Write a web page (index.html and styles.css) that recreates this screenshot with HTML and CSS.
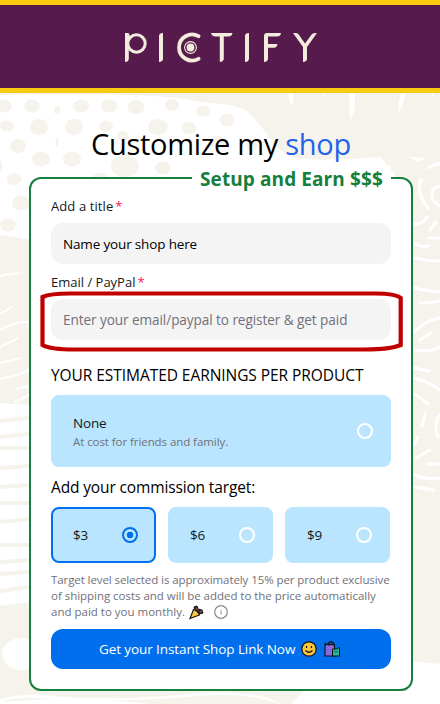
FILE: index.html
```html
<!DOCTYPE html>
<html lang="en">
<head>
<meta charset="utf-8">
<title>Pictify</title>
<link rel="stylesheet" href="styles.css">
</head>
<body>
<header class="top">
<svg class="logo" width="194" height="32" viewBox="123 31 194 32" fill="none" stroke="#f3ecdc" stroke-width="3.8" role="img" aria-label="Pictify">
<path d="M125 33H128.500L130 36V40L128.800 42V59Q128.500 62 125 62Z" fill="#f3ecdc" stroke="none"/><circle cx="136.500" cy="43.500" r="8.700" stroke-width="3"/>
<path d="M159 36Q159 33 163 33V59Q162.500 62 159 62Z" fill="#f3ecdc" stroke="none"/>
<path d="M198.500 36.200A13 13 0 1 0 198.500 58.800" stroke-width="3.800" stroke-linecap="round"/>
<circle cx="190.500" cy="47.500" r="5.900" stroke-width="1.100"/><circle cx="190.500" cy="47.500" r="3.900" fill="#f3ecdc" stroke="none"/>
<path d="M211 33H232.500Q232 36.500 228 36.500H223.800V59Q223 62 219.800 62V36.500H215Q211.500 36 211 33Z" fill="#f3ecdc" stroke="none"/>
<path d="M245 36Q245 33 249 33V59Q248.500 62 245 62Z" fill="#f3ecdc" stroke="none"/>
<path d="M264 36Q264 33 267 33H281Q280.500 36.500 277 36.500H268V44H277.500Q277 47.700 274 47.700H268V59Q267.500 62 264 62Z" fill="#f3ecdc" stroke="none"/>
<path d="M293 33H296Q298 33 299 35L305 43.500L312 34Q313 33 317 33L307 47V59Q306.500 62 303 62V47Z" fill="#f3ecdc" stroke="none"/>
</svg>
</header>
<main class="page">
<svg class="pattern" width="440" height="611" viewBox="0 93 440 611" aria-hidden="true">
<rect y="93" width="440" height="611" fill="#f6f3ec"/>
<path fill="#fff" d="M0 95C80 93 145 94 185 99C210 105 230 102 245 110C265 125 266 140 287 155Q305 163 380 157L395 175V240H30Q14 236 0 235Z"/>
<g fill="#f6f3ec"><ellipse cx="4" cy="106" rx="8" ry="6.500"/><ellipse cx="32" cy="106" rx="8" ry="6.500"/><ellipse cx="57" cy="110" rx="3" ry="4"/><ellipse cx="81" cy="106" rx="8" ry="6.500"/><ellipse cx="109" cy="106" rx="8" ry="6.500"/><ellipse cx="136" cy="107" rx="8.500" ry="7"/><ellipse cx="172" cy="105" rx="7" ry="6"/><ellipse cx="203" cy="111" rx="7" ry="5.500"/><ellipse cx="227" cy="120" rx="7.500" ry="6.500"/><ellipse cx="7" cy="126" rx="7" ry="5.500"/><ellipse cx="39" cy="127" rx="9" ry="8"/><ellipse cx="74" cy="127" rx="9" ry="8"/><ellipse cx="106" cy="126" rx="7" ry="5.500"/><ellipse cx="158" cy="127" rx="10" ry="8"/><ellipse cx="189" cy="128" rx="7.500" ry="6"/><ellipse cx="123" cy="136" rx="6" ry="5"/><ellipse cx="57" cy="142" rx="1.500" ry="4"/><ellipse cx="18" cy="146" rx="8" ry="7"/><ellipse cx="41" cy="159" rx="9" ry="7.500"/><ellipse cx="72" cy="159" rx="9" ry="7.500"/><ellipse cx="125" cy="166" rx="14" ry="11"/><ellipse cx="163" cy="168" rx="8" ry="6.500"/><ellipse cx="0" cy="166" rx="2" ry="5"/><ellipse cx="14" cy="179" rx="7.500" ry="6"/><ellipse cx="100" cy="177" rx="7" ry="4"/><ellipse cx="21" cy="203" rx="9" ry="7.500"/><ellipse cx="8" cy="225" rx="8" ry="6.500"/><ellipse cx="218" cy="142" rx="9" ry="6"/><ellipse cx="252" cy="146" rx="6" ry="5"/></g>
<g fill="#fff"><path d="M288 93H293V106Q289 101 288 93M323 93H325L324 99M349 93H355Q356 112 350 121M401 93H405Q403 108 399 112Q397 108 401 93M430 93H433L434 97Z"/><path d="M395 157L408 164M410 157L427 158L417 162Z"/></g>
<g fill="none" stroke="#fff" stroke-width="3" stroke-linecap="round"><path d="M429 168Q433 164 440 164M421 180Q415 191 428 208M440 186Q431 187 432 197Q435 204 440 206M414 224Q423 224 427 217M430 230L436 222M414 243Q422 248 428 246M429 238H440M414 258Q427 261 440 261M420 303Q431 303 440 301M414 288Q426 291 440 292M414 332Q426 320 440 318M420 340L431 333M414 350Q430 353 440 347M414 368L429 371M414 378Q430 382 440 390M414 394Q422 398 428 404M425 414L422 426M440 414Q433 424 438 437M414 444L418 437M416 458L430 450M428 464H440M414 475Q426 480 440 478M414 487L434 490"/></g>
<g fill="none" stroke="#fff" stroke-width="2" stroke-linecap="round"><path d="M0 276Q8 274 22 273M0 314L12 307M0 330Q15 321 29 322M0 347L18 338M0 363L21 358M0 379Q17 376 29 370M17 389L29 386M15 402L29 395M0 404H5"/></g>
<path fill="#fff" d="M0 403L29 405V602L0 606Z"/>
<path fill="none" stroke="#f6f3ec" stroke-width="4" d="M0 421L29 418M0 437L29 434M0 448H29M0 468L29 466M0 487L29 485M0 503H29M0 522L29 519M0 545H29M0 562L29 560M0 574L29 572M0 591L29 587"/>
<ellipse cx="21" cy="654" rx="19" ry="16" fill="#fff"/>
<path fill="#fff" d="M0 699Q30 691 60 697Q130 701 200 693Q260 690 281 704H291L305 690L413 661L440 664V704H0V702Q80 695 150 704H280Q250 692 200 696Q100 704 40 698Q20 696 0 702Z"/>
</svg>
<h1 class="title">Customize my <span class="accent">shop</span></h1>
<form class="card">
<div class="legend">Setup and Earn $$$</div>
<label class="label l1"><span>Add a title</span><span class="req">*</span></label>
<div class="input filled">Name your shop here</div>
<label class="label l2"><span>Email / PayPal</span><span class="req">*</span></label>
<div class="input empty">Enter your email/paypal to register &amp; get paid
<svg class="mark" width="364" height="62" viewBox="40 290 364 62" fill="none" stroke="#c00000" stroke-width="4.2"><path d="M42.500 297Q50 293.500 70 293.500H375Q395 293.500 400.700 298V345Q390 349.500 365 349.500H75Q50 349.500 42.500 345Z"/></svg></div>
<h2 class="sub s1">YOUR ESTIMATED EARNINGS PER PRODUCT</h2>
<div class="option wide"><div><div class="name">None</div><div class="desc">At cost for friends and family.</div></div><i class="radio"></i></div>
<h2 class="sub s2">Add your commission target:</h2>
<div class="options">
<div class="option on"><span class="name">$3</span><i class="radio"></i></div>
<div class="option"><span class="name">$6</span><i class="radio"></i></div>
<div class="option"><span class="name">$9</span><i class="radio"></i></div>
</div>
<div class="note"><div class="n1">Target level selected is approximately 15% per product exclusive</div><div class="n2">of shipping costs and will be added to the price automatically</div><div class="n3"><span>and paid to you monthly.</span>
<svg class="party" width="15" height="15" viewBox="0 0 15 15"><path d="M5 2L8 1L9 4L13 5L14 8L10 9L7 7Z" fill="#17343b" stroke="#111"/><path d="M7 3L9 5M11 7L13 6" stroke="#b33d45" stroke-width="1.500"/><path d="M1 13.500L4.500 4.500Q9 6 10.500 10Z" fill="#fcc642" stroke="#111" stroke-width="1.100"/></svg>
<svg class="info" width="14" height="14" viewBox="0 0 14 14" fill="none" stroke="#858993"><circle cx="7" cy="7" r="6.300" stroke-width="1.200"/><path d="M7 4.500V5.500M6.300 6.800H7.200V9.500" stroke-width="1"/></svg></div></div>
<button class="cta" type="button"><span>Get your Instant Shop Link Now</span>
<svg width="16" height="16" viewBox="0 0 16 16"><circle cx="8" cy="8" r="7.200" fill="#fcc63b" stroke="#111" stroke-width="1.200"/><path d="M5.500 5V7M10.500 5V7M4.500 9.500Q8 13 11.500 9.500" fill="none" stroke="#111" stroke-width="1.200"/></svg>
<svg class="bags" width="17" height="16" viewBox="0 0 17 16"><path d="M4 3Q5 .7 7 .7T10 4" fill="none" stroke="#111" stroke-width="1.300"/><path d="M1 2L2 4L3.500 3L5 4L6.500 3L8 4L10.500 3.500V15H1Z" fill="#8868df" stroke="#111" stroke-width="1.100"/><path d="M8.500 8H12L15.500 6.500V15H8.500Z" fill="#21bba0" stroke="#111"/><path d="M10 10Q12 13 14 10" fill="none" stroke="#08665c"/></svg></button>
</form>
</main>
</body>
</html>
```
FILE: styles.css
```css
*{box-sizing:border-box}
body{margin:0;width:440px;height:704px;overflow:hidden;font-family:"Open Sans","Noto Sans",sans-serif;color:#000;background:#fff}
.top{height:93px;background:#561b4c;border-top:5px solid #f8cb10;border-bottom:5px solid #f8cb10;display:flex;justify-content:center;padding-top:26px}
.logo{display:block}
.page{position:relative;height:611px;padding:32px 27px 0 29px}
.pattern{position:absolute;left:0;top:0}
.title{position:relative;margin:0;height:52px;padding-left:62px;font-size:29px;line-height:38px;font-weight:400;letter-spacing:-.3px;white-space:nowrap}
.accent{color:#2563eb}
.card{position:relative;width:384px;height:514px;border:2px solid #15803d;border-radius:12px;background:#fff;padding:0 20px;white-space:nowrap}
.legend{position:absolute;right:20px;top:-14px;width:199px;height:30px;padding-left:8px;background:#fff;color:#15803d;font-weight:700;font-size:19px;line-height:28px;letter-spacing:.1px}
.label{display:flex;font-size:13px;line-height:18px;color:#11181c}
.l1{margin-top:18px;letter-spacing:.1px}
.l2{margin-top:9px}
.req{color:#f31260;margin-left:2px}
.input{position:relative;height:41px;margin-top:8px;border-radius:12px;background:#f4f4f5;padding-left:12px;line-height:42px}
.filled{font-size:13.5px;letter-spacing:-.16px}
.empty{font-size:13.6px;letter-spacing:-.08px;color:#71717a}
.mark{position:absolute;left:-11px;top:-9px}
.sub{margin:0;font-weight:400;font-size:15.5px;line-height:22px}
.s1{margin-top:24px;letter-spacing:-.06px}
.s2{margin-top:9px;letter-spacing:-.14px}
.option{background:#b9e6fe;border-radius:8px;display:flex;align-items:center;justify-content:space-between;padding:0 18px 0 22px;height:56px}
.wide{height:72px;margin-top:9px}
.name{font-size:13.5px;line-height:20px;letter-spacing:-.15px;color:#11181c}
.desc{font-size:11.5px;line-height:17px;letter-spacing:-.07px;color:#71717a}
.radio{width:16px;height:16px;border:2px solid #fff;border-radius:50%}
.options{display:grid;grid-template-columns:repeat(3,105px);gap:12px;margin-top:9px}
.on{border:2px solid #006fee;padding:0 16px 0 20px}
.on .radio{border-color:#006fee;background:radial-gradient(circle,#006fee 3px,transparent 3.600px)}
.note{margin-top:9px;font-size:11.5px;line-height:16px;color:#71717a}
.n1{letter-spacing:-.09px}
.n2{letter-spacing:-.03px}
.n3{display:flex;align-items:center}
.party{margin-left:4px}
.info{margin-left:10px}
.cta{margin-top:9px;width:340px;height:40px;border:0;border-radius:12px;background:#006fee;color:#fff;font:13.5px "Open Sans","Noto Sans",sans-serif;letter-spacing:-.09px;display:flex;align-items:center;padding:0 0 0 48px}
.cta svg{margin-left:6px}
.cta .bags{margin-left:7px}
```
